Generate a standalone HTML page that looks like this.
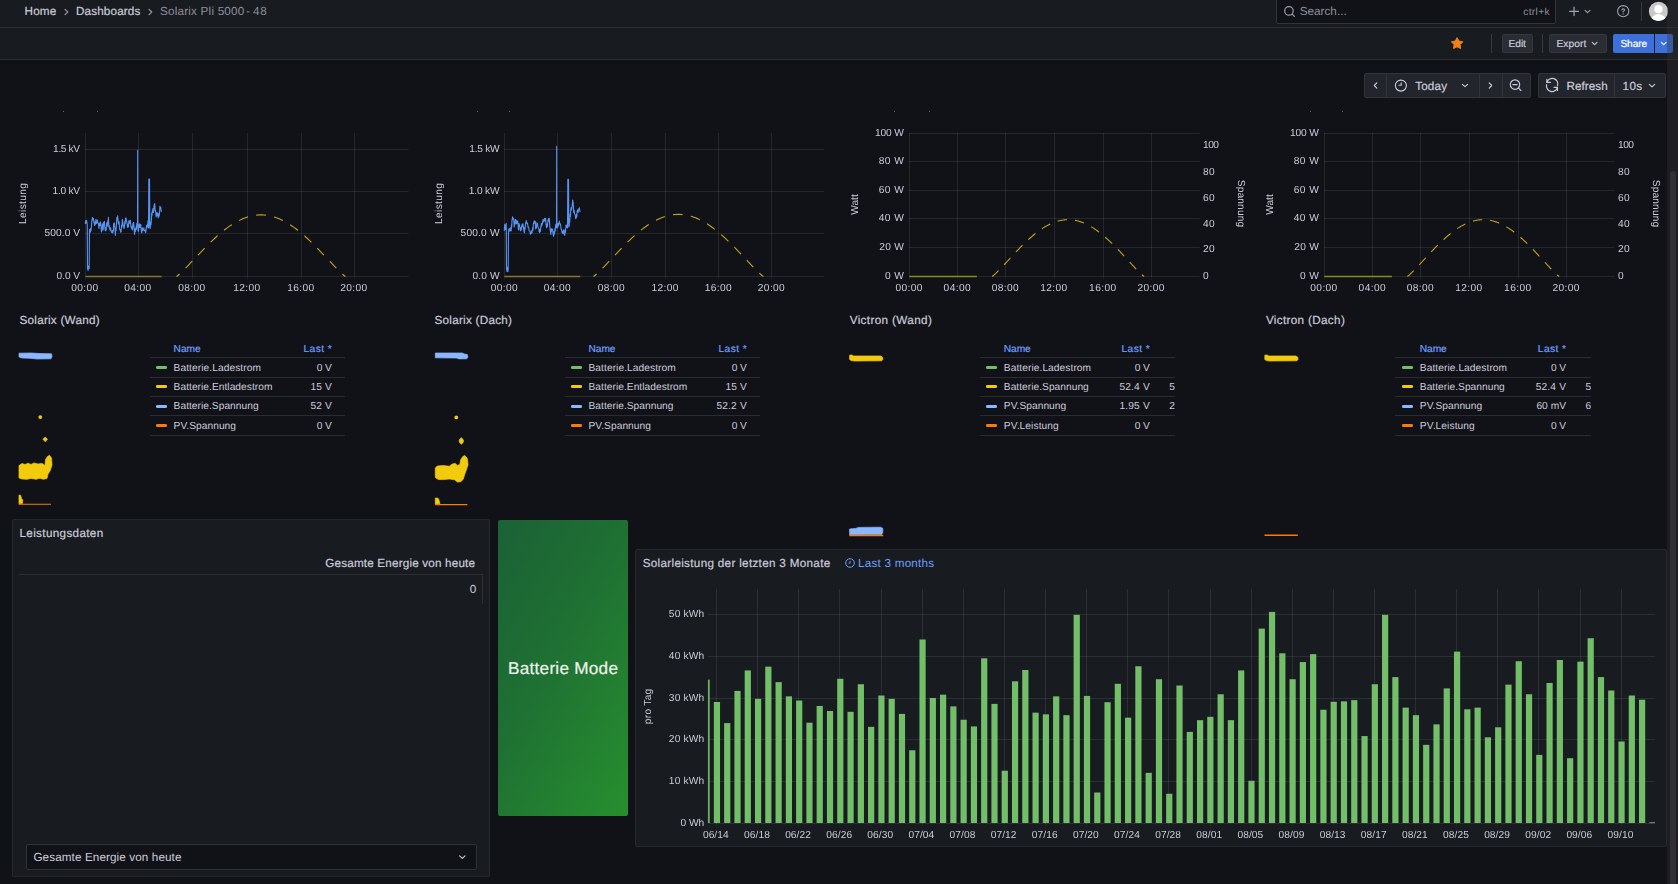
<!DOCTYPE html>
<html lang="en"><head><meta charset="utf-8"><title>Solarix Pli 5000-48 - Dashboards - Grafana</title>
<style>
html,body{margin:0;padding:0}
body{width:1678px;height:884px;overflow:hidden;background:#111217;position:relative;font-family:"Liberation Sans", sans-serif;-webkit-font-smoothing:antialiased}
#r{position:absolute;left:0;top:0;width:1678px;height:884px;overflow:hidden;background:#111217}
#r>div,#r>svg{position:absolute}
#cv{left:0;top:0;width:1678px;height:884px;will-change:transform;pointer-events:none}
.t{position:absolute;white-space:pre;line-height:1;font-family:"Liberation Sans", sans-serif;text-rendering:geometricPrecision}
</style></head>
<body><div id="r">
<div style="left:0.00px;top:0.00px;width:1678.00px;height:27.00px;background:#181b1f;"></div>
<div style="left:0.00px;top:27.00px;width:1678.00px;height:1.00px;background:#2b2d33;"></div>
<div style="left:0.00px;top:28.00px;width:1678.00px;height:31.00px;background:#181b1f;"></div>
<div style="left:0.00px;top:59.00px;width:1678.00px;height:1.00px;background:#2b2d33;"></div>
<svg style="left:0px;top:0px;" width="300" height="27" viewBox="0 0 300 27"><path d="M65.0 9.3 L67.80000000000001 12.0 L65.0 14.7" fill="none" stroke="#9a9ba8" stroke-width="1.15" stroke-linecap="round" stroke-linejoin="round"/><path d="M149.0 9.3 L151.8 12.0 L149.0 14.7" fill="none" stroke="#9a9ba8" stroke-width="1.15" stroke-linecap="round" stroke-linejoin="round"/></svg>
<div style="left:1276px;top:-4px;width:280px;height:27.5px;background:#111217;border:1px solid #33353d;border-radius:2px;box-sizing:border-box"></div>
<svg style="left:1280px;top:2px;" width="20" height="20" viewBox="0 0 20 20"><circle cx="8.95" cy="8.95" r="4.25" fill="none" stroke="#9d9eac" stroke-width="1.2"/><path d="M12.1 12.1 L14.4 14.4" stroke="#9d9eac" stroke-width="1.2" stroke-linecap="round"/></svg>
<svg style="left:1564px;top:2px;" width="30" height="20" viewBox="0 0 30 20"><path d="M10.05 5.0 V13.6 M5.6 9.3 H14.5" stroke="#a3a4b2" stroke-width="1.2" stroke-linecap="round"/><path d="M21.0 8.3 L23.5 10.6 L26.0 8.3" fill="none" stroke="#a3a4b2" stroke-width="1.1" stroke-linecap="round" stroke-linejoin="round"/></svg>
<svg style="left:1614px;top:2px;" width="20" height="20" viewBox="0 0 20 20"><circle cx="9.2" cy="9.2" r="5.6" fill="none" stroke="#a3a4b2" stroke-width="1.05"/><path d="M7.9 8.0 Q8.0 6.7 9.2 6.7 Q10.5 6.7 10.5 7.9 Q10.5 8.7 9.2 9.4 V10.0" fill="none" stroke="#a3a4b2" stroke-width="1.05" stroke-linecap="round"/><circle cx="9.2" cy="11.9" r="0.7" fill="#a3a4b2"/></svg>
<div style="left:1641.00px;top:2.00px;width:1.00px;height:18.50px;background:#393b43;"></div>
<svg style="left:1648px;top:1px;" width="22" height="22" viewBox="0 0 22 22"><defs><clipPath id="av"><circle cx="10.5" cy="10.4" r="9.6"/></clipPath></defs><circle cx="10.5" cy="10.4" r="9.6" fill="#c9c9c9"/><g clip-path="url(#av)"><circle cx="10.5" cy="8.2" r="4.1" fill="#fff"/><ellipse cx="10.5" cy="19.6" rx="7.4" ry="6.6" fill="#fff"/></g></svg>
<svg style="left:1448px;top:34px;" width="18" height="18" viewBox="0 0 18 18"><polygon points="9.10,3.65 10.95,7.10 14.81,7.80 12.10,10.62 12.63,14.50 9.10,12.80 5.57,14.50 6.10,10.62 3.39,7.80 7.25,7.10" fill="#ee8219" stroke="#ee8219" stroke-width="1.0" stroke-linejoin="round"/></svg>
<div style="left:1491.00px;top:34.00px;width:1.00px;height:19.00px;background:#393b43;"></div>
<div style="left:1542.00px;top:34.00px;width:1.00px;height:19.00px;background:#393b43;"></div>
<div style="left:1502px;top:34.3px;width:31px;height:18.5px;background:#2a2d33;border:1px solid #34373e;border-radius:2px;box-sizing:border-box"></div>
<div style="left:1549px;top:34.3px;width:58px;height:18.5px;background:#2a2d33;border:1px solid #34373e;border-radius:2px;box-sizing:border-box"></div>
<svg style="left:1588px;top:38px;" width="14" height="12" viewBox="0 0 14 12"><path d="M4.2 4.4 L6.6 6.7 L9.0 4.4" fill="none" stroke="#ccccdc" stroke-width="1.05" stroke-linecap="round" stroke-linejoin="round"/></svg>
<div style="left:1613px;top:34.3px;width:41px;height:18.5px;background:#3d71d9;border-radius:2px 0 0 2px"></div>
<div style="left:1655px;top:34.3px;width:18px;height:18.5px;background:#3d71d9;border-radius:0 2px 2px 0"></div>
<svg style="left:1657px;top:38px;" width="14" height="12" viewBox="0 0 14 12"><path d="M4.3 4.4 L6.7 6.7 L9.1 4.4" fill="none" stroke="#ffffff" stroke-width="1.05" stroke-linecap="round" stroke-linejoin="round"/></svg>
<div style="left:1364.4px;top:73.3px;width:23px;height:24.4px;background:#22252b;border:1px solid #32343b;border-radius:2px 0 0 2px;box-sizing:border-box"></div>
<div style="left:1386.4px;top:73.3px;width:93.6px;height:24.4px;background:#22252b;border:1px solid #32343b;border-radius:0;box-sizing:border-box"></div>
<div style="left:1479.0px;top:73.3px;width:23.8px;height:24.4px;background:#22252b;border:1px solid #32343b;border-radius:0;box-sizing:border-box"></div>
<div style="left:1501.8px;top:73.3px;width:29.0px;height:24.4px;background:#22252b;border:1px solid #32343b;border-radius:0 2px 2px 0;box-sizing:border-box"></div>
<div style="left:1538.1px;top:73.3px;width:76.6px;height:24.4px;background:#22252b;border:1px solid #32343b;border-radius:2px 0 0 2px;box-sizing:border-box"></div>
<div style="left:1613.7px;top:73.3px;width:52.3px;height:24.4px;background:#22252b;border:1px solid #32343b;border-radius:0 2px 2px 0;box-sizing:border-box"></div>
<svg style="left:1364px;top:73px;" width="170" height="26" viewBox="0 0 170 26"><path d="M12.8 9.9 L10.3 12.5 L12.8 15.1" fill="none" stroke="#ccccdc" stroke-width="1.15" stroke-linecap="round" stroke-linejoin="round"/><circle cx="36.9" cy="12.6" r="5.5" fill="none" stroke="#ccccdc" stroke-width="1.1"/><path d="M37.2 9.9 V12.3 H35.0" fill="none" stroke="#ccccdc" stroke-width="1.1" stroke-linecap="round" stroke-linejoin="round"/><path d="M98.4 11.3 L101.0 13.7 L103.6 11.3" fill="none" stroke="#ccccdc" stroke-width="1.1" stroke-linecap="round" stroke-linejoin="round"/><path d="M125.2 9.9 L127.7 12.5 L125.2 15.1" fill="none" stroke="#ccccdc" stroke-width="1.15" stroke-linecap="round" stroke-linejoin="round"/><circle cx="151.0" cy="11.6" r="4.7" fill="none" stroke="#ccccdc" stroke-width="1.15"/><path d="M148.8 11.6 H153.2 M154.5 15.1 L156.9 17.5" fill="none" stroke="#ccccdc" stroke-width="1.15" stroke-linecap="round"/></svg>
<svg style="left:1543px;top:76px;" width="20" height="20" viewBox="0 0 20 20"><path d="M3.9 6.4 A5.5 5.5 0 0 1 14.6 9.6" fill="none" stroke="#ccccdc" stroke-width="1.15" stroke-linecap="round"/><path d="M3.9 3.3 V6.4 H7.4" fill="none" stroke="#ccccdc" stroke-width="1.15" stroke-linecap="round" stroke-linejoin="round"/><path d="M14.5 11.3 A5.5 5.5 0 0 1 3.6 8.6" fill="none" stroke="#ccccdc" stroke-width="1.15" stroke-linecap="round"/><path d="M14.5 14.4 V11.3 H11.0" fill="none" stroke="#ccccdc" stroke-width="1.15" stroke-linecap="round" stroke-linejoin="round"/></svg>
<svg style="left:1645px;top:80px;" width="14" height="12" viewBox="0 0 14 12"><path d="M4.3 4.4 L7.0 6.9 L9.7 4.4" fill="none" stroke="#ccccdc" stroke-width="1.1" stroke-linecap="round" stroke-linejoin="round"/></svg>
<svg style="left:0px;top:0px;pointer-events:none" width="1678" height="300" viewBox="0 0 1678 300"><line x1="85.5" y1="133.0" x2="85.5" y2="277.0" stroke="rgba(240,250,255,0.09)" stroke-width="1"/><line x1="85.5" y1="277.0" x2="85.5" y2="280.0" stroke="rgba(240,250,255,0.045)" stroke-width="1"/><line x1="138.5" y1="133.0" x2="138.5" y2="277.0" stroke="rgba(240,250,255,0.09)" stroke-width="1"/><line x1="138.5" y1="277.0" x2="138.5" y2="280.0" stroke="rgba(240,250,255,0.045)" stroke-width="1"/><line x1="192.5" y1="133.0" x2="192.5" y2="277.0" stroke="rgba(240,250,255,0.09)" stroke-width="1"/><line x1="192.5" y1="277.0" x2="192.5" y2="280.0" stroke="rgba(240,250,255,0.045)" stroke-width="1"/><line x1="247.5" y1="133.0" x2="247.5" y2="277.0" stroke="rgba(240,250,255,0.09)" stroke-width="1"/><line x1="247.5" y1="277.0" x2="247.5" y2="280.0" stroke="rgba(240,250,255,0.045)" stroke-width="1"/><line x1="301.5" y1="133.0" x2="301.5" y2="277.0" stroke="rgba(240,250,255,0.09)" stroke-width="1"/><line x1="301.5" y1="277.0" x2="301.5" y2="280.0" stroke="rgba(240,250,255,0.045)" stroke-width="1"/><line x1="354.5" y1="133.0" x2="354.5" y2="277.0" stroke="rgba(240,250,255,0.09)" stroke-width="1"/><line x1="354.5" y1="277.0" x2="354.5" y2="280.0" stroke="rgba(240,250,255,0.045)" stroke-width="1"/><line x1="85" y1="149.5" x2="408.50" y2="149.5" stroke="rgba(240,250,255,0.09)" stroke-width="1"/><line x1="85" y1="191.5" x2="408.50" y2="191.5" stroke="rgba(240,250,255,0.09)" stroke-width="1"/><line x1="85" y1="233.5" x2="408.50" y2="233.5" stroke="rgba(240,250,255,0.09)" stroke-width="1"/><line x1="85" y1="276.5" x2="408.50" y2="276.5" stroke="rgba(240,250,255,0.09)" stroke-width="1"/><polyline points="85.24,223.88 85.72,220.63 86.02,223.23 86.49,220.40 86.71,221.10 87.01,223.70 87.24,223.88 87.49,268.60 87.73,268.07 88.03,270.67 88.28,266.40 88.58,266.05 88.88,268.65 89.18,268.60 89.48,229.86 89.82,229.59 90.12,232.19 90.47,231.85 90.82,227.94 91.12,230.54 91.47,225.87 91.72,221.89 92.44,217.46 92.74,220.06 93.46,218.40 93.96,222.89 94.18,222.88 94.48,225.48 94.70,225.37 95.18,221.66 95.48,224.26 95.95,219.40 96.17,220.88 96.47,223.48 96.70,222.39 97.42,220.05 97.72,222.65 98.44,223.88 98.94,228.36 99.53,222.96 99.83,225.56 100.43,221.89 100.78,223.77 101.08,226.37 101.43,231.85 101.77,227.93 102.07,230.53 102.42,223.88 102.64,226.42 102.94,229.02 103.17,229.86 103.64,222.31 103.94,224.91 104.41,221.39 104.76,226.94 105.06,229.54 105.41,230.85 105.88,227.61 106.18,230.21 106.65,222.89 106.88,223.76 107.18,226.36 107.40,225.87 107.75,220.85 108.05,223.45 108.40,217.41 108.89,226.87 109.24,225.55 109.54,228.15 109.89,229.86 110.61,227.67 110.91,230.27 111.63,232.34 112.35,230.42 112.65,233.02 113.37,230.85 113.72,223.63 114.02,226.23 114.37,222.89 114.72,226.45 115.02,229.05 115.37,235.33 115.71,228.17 116.01,230.77 116.36,225.87 116.83,217.53 117.13,220.13 117.61,215.91 117.83,218.44 118.13,221.04 118.35,223.88 118.58,221.32 118.88,223.92 119.10,221.89 119.32,226.08 119.62,228.68 119.85,229.86 120.32,229.64 120.62,232.24 121.09,231.85 121.56,224.94 121.86,227.54 122.34,219.40 122.68,221.34 122.98,223.94 123.33,225.87 123.68,226.03 123.98,228.63 124.33,227.37 124.80,221.40 125.10,224.00 125.57,218.40 126.04,217.87 126.34,220.47 126.82,221.89 127.17,224.77 127.47,227.37 127.81,225.87 128.16,224.26 128.46,226.86 128.81,220.89 129.41,220.84 129.71,223.44 130.30,220.40 130.65,223.74 130.95,226.34 131.30,227.86 131.77,226.75 132.07,229.35 132.54,229.86 132.89,223.63 133.19,226.23 133.54,222.39 133.89,226.13 134.19,228.73 134.53,234.34 135.01,228.90 135.31,231.50 135.78,229.86 136.13,226.74 136.43,229.34 136.77,223.88 137.01,223.14 137.31,225.74 137.55,225.87 137.67,150.20 137.80,227.86 138.01,229.08 138.31,231.68 138.52,229.86 138.74,225.07 139.04,227.67 139.26,223.88 139.86,224.85 140.16,227.45 140.76,224.38 141.11,228.84 141.41,231.44 141.75,232.84 142.35,227.85 142.65,230.45 143.25,229.86 143.84,227.78 144.14,230.38 144.74,230.85 145.34,230.11 145.64,232.71 146.23,228.36 146.58,225.44 146.88,228.04 147.23,225.37 147.45,223.95 147.75,226.55 147.98,220.89 148.52,227.86 148.82,179.00 149.22,225.87 149.52,179.00 149.82,227.86 150.22,228.36 150.69,222.13 150.99,224.73 151.46,219.40 151.69,212.99 151.99,215.59 152.21,212.93 152.43,209.96 152.73,212.56 152.96,208.45 153.18,209.87 153.48,212.47 153.70,211.43 154.05,205.14 154.35,207.74 154.70,203.47 155.20,210.94 155.54,210.81 155.84,213.41 156.19,216.91 156.79,212.88 157.09,215.48 157.69,212.93 157.91,215.41 158.21,218.01 158.43,216.41 158.90,213.51 159.20,216.11 159.68,210.94 159.90,206.21 160.20,208.81 160.42,207.45 160.77,207.28 161.07,209.88 161.42,211.93" fill="none" stroke="#5794f2" stroke-width="1.1" stroke-linejoin="round"/><line x1="85.50" y1="276.45" x2="161.50" y2="276.45" stroke="#857829" stroke-width="1.4"/><polyline points="176.50,276.50 177.91,275.46 179.31,274.24 180.72,272.94 182.13,271.59 183.54,270.20 184.94,268.79 186.35,267.35 187.76,265.89 189.17,264.42 190.57,262.94 191.98,261.46 193.39,259.97 194.80,258.47 196.20,256.98 197.61,255.49 199.02,254.01 200.43,252.53 201.84,251.06 203.24,249.60 204.65,248.16 206.06,246.73 207.47,245.31 208.87,243.91 210.28,242.53 211.69,241.17 213.09,239.83 214.50,238.51 215.91,237.22 217.32,235.96 218.72,234.72 220.13,233.51 221.54,232.32 222.95,231.17 224.35,230.05 225.76,228.97 227.17,227.92 228.58,226.90 229.98,225.92 231.39,224.97 232.80,224.07 234.21,223.20 235.61,222.37 237.02,221.58 238.43,220.83 239.84,220.13 241.25,219.46 242.65,218.84 244.06,218.27 245.47,217.73 246.88,217.25 248.28,216.80 249.69,216.41 251.10,216.05 252.50,215.75 253.91,215.49 255.32,215.28 256.73,215.11 258.13,214.99 259.54,214.92 260.95,214.90 262.36,214.92 263.76,214.99 265.17,215.11 266.58,215.28 267.99,215.49 269.39,215.75 270.80,216.05 272.21,216.41 273.62,216.80 275.02,217.25 276.43,217.73 277.84,218.27 279.25,218.84 280.65,219.46 282.06,220.13 283.47,220.83 284.88,221.58 286.28,222.37 287.69,223.20 289.10,224.07 290.51,224.97 291.91,225.92 293.32,226.90 294.73,227.92 296.14,228.97 297.54,230.05 298.95,231.17 300.36,232.32 301.77,233.51 303.17,234.72 304.58,235.96 305.99,237.22 307.40,238.51 308.80,239.83 310.21,241.17 311.62,242.53 313.03,243.91 314.43,245.31 315.84,246.73 317.25,248.16 318.66,249.60 320.06,251.06 321.47,252.53 322.88,254.01 324.29,255.49 325.69,256.98 327.10,258.47 328.51,259.97 329.92,261.46 331.32,262.94 332.73,264.42 334.14,265.89 335.55,267.35 336.95,268.79 338.36,270.20 339.77,271.59 341.18,272.94 342.58,274.24 343.99,275.46 345.40,276.50" fill="none" stroke="#c4a417" stroke-width="1.1" stroke-dasharray="9.6 8.4" stroke-dashoffset="5.6"/></svg>
<svg style="left:0px;top:0px;pointer-events:none" width="1678" height="300" viewBox="0 0 1678 300"><line x1="504.5" y1="133.0" x2="504.5" y2="277.0" stroke="rgba(240,250,255,0.09)" stroke-width="1"/><line x1="504.5" y1="277.0" x2="504.5" y2="280.0" stroke="rgba(240,250,255,0.045)" stroke-width="1"/><line x1="557.5" y1="133.0" x2="557.5" y2="277.0" stroke="rgba(240,250,255,0.09)" stroke-width="1"/><line x1="557.5" y1="277.0" x2="557.5" y2="280.0" stroke="rgba(240,250,255,0.045)" stroke-width="1"/><line x1="611.5" y1="133.0" x2="611.5" y2="277.0" stroke="rgba(240,250,255,0.09)" stroke-width="1"/><line x1="611.5" y1="277.0" x2="611.5" y2="280.0" stroke="rgba(240,250,255,0.045)" stroke-width="1"/><line x1="665.5" y1="133.0" x2="665.5" y2="277.0" stroke="rgba(240,250,255,0.09)" stroke-width="1"/><line x1="665.5" y1="277.0" x2="665.5" y2="280.0" stroke="rgba(240,250,255,0.045)" stroke-width="1"/><line x1="718.5" y1="133.0" x2="718.5" y2="277.0" stroke="rgba(240,250,255,0.09)" stroke-width="1"/><line x1="718.5" y1="277.0" x2="718.5" y2="280.0" stroke="rgba(240,250,255,0.045)" stroke-width="1"/><line x1="771.5" y1="133.0" x2="771.5" y2="277.0" stroke="rgba(240,250,255,0.09)" stroke-width="1"/><line x1="771.5" y1="277.0" x2="771.5" y2="280.0" stroke="rgba(240,250,255,0.045)" stroke-width="1"/><line x1="504" y1="149.5" x2="824.30" y2="149.5" stroke="rgba(240,250,255,0.09)" stroke-width="1"/><line x1="504" y1="191.5" x2="824.30" y2="191.5" stroke="rgba(240,250,255,0.09)" stroke-width="1"/><line x1="504" y1="233.5" x2="824.30" y2="233.5" stroke="rgba(240,250,255,0.09)" stroke-width="1"/><line x1="504" y1="276.5" x2="824.30" y2="276.5" stroke="rgba(240,250,255,0.09)" stroke-width="1"/><polyline points="504.24,230.85 504.74,224.38 505.09,226.94 505.39,229.54 505.74,228.36 506.24,223.38 506.49,269.60 506.73,269.17 507.03,271.77 507.28,267.40 507.58,268.93 507.88,271.53 508.18,269.60 508.48,232.84 508.82,228.71 509.12,231.31 509.47,230.85 509.82,228.46 510.12,231.06 510.47,227.86 510.69,227.72 510.99,230.32 511.21,230.85 511.44,224.70 511.74,227.30 511.96,220.89 512.56,216.72 512.86,219.32 513.46,218.40 513.68,219.98 513.98,222.58 514.20,226.87 514.55,221.84 514.85,224.44 515.20,219.90 515.55,219.36 515.85,221.96 516.19,223.88 516.67,220.89 516.97,223.49 517.44,220.89 517.79,221.98 518.09,224.58 518.43,229.86 518.66,223.75 518.96,226.35 519.18,223.88 519.78,226.99 520.08,229.59 520.67,230.85 521.02,227.21 521.32,229.81 521.67,226.87 522.14,224.13 522.44,226.73 522.91,223.88 523.51,228.09 523.81,230.69 524.41,232.84 524.76,226.94 525.06,229.54 525.40,224.88 526.25,220.63 526.55,223.23 527.40,222.89 527.74,224.82 528.04,227.42 528.39,226.87 528.74,227.95 529.04,230.55 529.39,230.85 529.98,231.49 530.28,234.09 530.88,233.34 531.48,230.83 531.78,233.43 532.37,229.86 532.72,227.64 533.02,230.24 533.37,223.88 534.22,220.73 534.52,223.33 535.36,221.39 535.61,228.86 536.08,225.72 536.38,228.32 536.86,222.89 537.45,223.50 537.75,226.10 538.35,227.86 538.82,229.12 539.12,231.72 539.59,232.34 540.07,229.01 540.37,231.61 540.84,226.87 541.44,223.26 541.74,225.86 542.33,223.88 543.05,219.26 543.35,221.86 544.07,220.89 544.67,218.23 544.97,220.83 545.57,218.40 545.92,222.79 546.22,225.39 546.56,227.86 547.04,223.98 547.34,226.58 547.81,221.89 548.41,218.62 548.71,221.22 549.30,218.40 549.80,225.87 550.15,229.43 550.45,232.03 550.80,234.34 551.27,228.90 551.57,231.50 552.04,228.86 552.64,229.88 552.94,232.48 553.53,236.33 554.01,231.51 554.31,234.11 554.78,230.85 555.00,228.45 555.30,231.05 555.53,225.87 555.89,224.23 556.19,226.83 556.55,227.86 556.67,146.30 556.80,226.87 557.01,224.37 557.31,226.97 557.52,227.86 557.99,223.30 558.29,225.90 558.76,224.88 559.36,221.05 559.66,223.65 560.26,223.88 560.48,224.08 560.78,226.68 561.00,228.86 561.60,229.87 561.90,232.47 562.50,232.84 562.84,231.46 563.14,234.06 563.49,229.86 563.96,230.55 564.26,233.15 564.74,235.33 565.08,229.97 565.38,232.57 565.73,228.36 566.20,224.89 566.50,227.49 566.98,225.87 567.52,227.86 567.82,179.40 568.22,223.88 568.52,179.40 568.82,226.87 569.22,225.87 569.44,219.73 569.74,222.33 569.96,217.91 570.19,213.84 570.49,216.44 570.71,209.94 571.18,207.61 571.48,210.21 571.96,207.45 572.45,202.47 572.68,200.11 572.98,202.71 573.20,202.47 573.70,212.43 574.17,210.40 574.47,213.00 574.94,214.42 575.42,216.11 575.72,218.71 576.19,217.91 576.54,214.03 576.84,216.63 577.18,210.94 577.90,209.84 578.20,212.44 578.93,208.45 579.40,207.74 579.70,210.34 580.17,211.93" fill="none" stroke="#5794f2" stroke-width="1.1" stroke-linejoin="round"/><line x1="504.40" y1="276.45" x2="580.20" y2="276.45" stroke="#857829" stroke-width="1.4"/><polyline points="593.50,276.50 594.92,275.45 596.33,274.22 597.75,272.91 599.16,271.55 600.58,270.15 602.00,268.72 603.41,267.27 604.83,265.81 606.24,264.33 607.66,262.83 609.07,261.34 610.49,259.83 611.91,258.33 613.32,256.82 614.74,255.32 616.15,253.83 617.57,252.34 618.99,250.86 620.40,249.39 621.82,247.93 623.23,246.48 624.65,245.06 626.06,243.65 627.48,242.25 628.90,240.88 630.31,239.53 631.73,238.21 633.14,236.90 634.56,235.63 635.98,234.38 637.39,233.16 638.81,231.97 640.22,230.81 641.64,229.68 643.05,228.58 644.47,227.52 645.89,226.50 647.30,225.51 648.72,224.55 650.13,223.64 651.55,222.76 652.97,221.93 654.38,221.13 655.80,220.38 657.21,219.67 658.63,219.00 660.04,218.38 661.46,217.79 662.88,217.26 664.29,216.77 665.71,216.32 667.12,215.92 668.54,215.56 669.96,215.26 671.37,214.99 672.79,214.78 674.20,214.61 675.62,214.50 677.03,214.42 678.45,214.40 679.87,214.42 681.28,214.50 682.70,214.61 684.11,214.78 685.53,214.99 686.94,215.26 688.36,215.56 689.78,215.92 691.19,216.32 692.61,216.77 694.02,217.26 695.44,217.79 696.86,218.38 698.27,219.00 699.69,219.67 701.10,220.38 702.52,221.13 703.93,221.93 705.35,222.76 706.77,223.64 708.18,224.55 709.60,225.51 711.01,226.50 712.43,227.52 713.85,228.58 715.26,229.68 716.68,230.81 718.09,231.97 719.51,233.16 720.92,234.38 722.34,235.63 723.76,236.90 725.17,238.21 726.59,239.53 728.00,240.88 729.42,242.25 730.84,243.65 732.25,245.06 733.67,246.48 735.08,247.93 736.50,249.39 737.91,250.86 739.33,252.34 740.75,253.83 742.16,255.32 743.58,256.82 744.99,258.33 746.41,259.83 747.83,261.34 749.24,262.83 750.66,264.33 752.07,265.81 753.49,267.27 754.90,268.72 756.32,270.15 757.74,271.55 759.15,272.91 760.57,274.22 761.98,275.45 763.40,276.50" fill="none" stroke="#c4a417" stroke-width="1.1" stroke-dasharray="9.6 8.4" stroke-dashoffset="5.6"/></svg>
<svg style="left:0px;top:0px;pointer-events:none" width="1678" height="300" viewBox="0 0 1678 300"><line x1="909.5" y1="133.0" x2="909.5" y2="277.0" stroke="rgba(240,250,255,0.09)" stroke-width="1"/><line x1="909.5" y1="277.0" x2="909.5" y2="280.0" stroke="rgba(240,250,255,0.045)" stroke-width="1"/><line x1="957.5" y1="133.0" x2="957.5" y2="277.0" stroke="rgba(240,250,255,0.09)" stroke-width="1"/><line x1="957.5" y1="277.0" x2="957.5" y2="280.0" stroke="rgba(240,250,255,0.045)" stroke-width="1"/><line x1="1005.5" y1="133.0" x2="1005.5" y2="277.0" stroke="rgba(240,250,255,0.09)" stroke-width="1"/><line x1="1005.5" y1="277.0" x2="1005.5" y2="280.0" stroke="rgba(240,250,255,0.045)" stroke-width="1"/><line x1="1054.5" y1="133.0" x2="1054.5" y2="277.0" stroke="rgba(240,250,255,0.09)" stroke-width="1"/><line x1="1054.5" y1="277.0" x2="1054.5" y2="280.0" stroke="rgba(240,250,255,0.045)" stroke-width="1"/><line x1="1103.5" y1="133.0" x2="1103.5" y2="277.0" stroke="rgba(240,250,255,0.09)" stroke-width="1"/><line x1="1103.5" y1="277.0" x2="1103.5" y2="280.0" stroke="rgba(240,250,255,0.045)" stroke-width="1"/><line x1="1151.5" y1="133.0" x2="1151.5" y2="277.0" stroke="rgba(240,250,255,0.09)" stroke-width="1"/><line x1="1151.5" y1="277.0" x2="1151.5" y2="280.0" stroke="rgba(240,250,255,0.045)" stroke-width="1"/><line x1="909" y1="133.5" x2="1199.70" y2="133.5" stroke="rgba(240,250,255,0.09)" stroke-width="1"/><line x1="909" y1="161.5" x2="1199.70" y2="161.5" stroke="rgba(240,250,255,0.09)" stroke-width="1"/><line x1="909" y1="190.5" x2="1199.70" y2="190.5" stroke="rgba(240,250,255,0.09)" stroke-width="1"/><line x1="909" y1="218.5" x2="1199.70" y2="218.5" stroke="rgba(240,250,255,0.09)" stroke-width="1"/><line x1="909" y1="247.5" x2="1199.70" y2="247.5" stroke="rgba(240,250,255,0.09)" stroke-width="1"/><line x1="909" y1="276.5" x2="1199.70" y2="276.5" stroke="rgba(240,250,255,0.09)" stroke-width="1"/><line x1="909.30" y1="276.45" x2="976.90" y2="276.45" stroke="#8a8a24" stroke-width="1.4"/><polyline points="992.20,276.50 993.47,275.54 994.73,274.41 996.00,273.22 997.26,271.97 998.53,270.69 999.80,269.39 1001.06,268.06 1002.33,266.72 1003.59,265.36 1004.86,264.00 1006.12,262.63 1007.39,261.25 1008.66,259.88 1009.92,258.50 1011.19,257.13 1012.45,255.76 1013.72,254.40 1014.99,253.04 1016.25,251.70 1017.52,250.37 1018.78,249.05 1020.05,247.74 1021.31,246.45 1022.58,245.18 1023.85,243.92 1025.11,242.69 1026.38,241.47 1027.64,240.28 1028.91,239.11 1030.17,237.97 1031.44,236.86 1032.71,235.77 1033.97,234.71 1035.24,233.67 1036.50,232.67 1037.77,231.70 1039.04,230.76 1040.30,229.86 1041.57,228.99 1042.83,228.15 1044.10,227.35 1045.37,226.59 1046.63,225.86 1047.90,225.17 1049.16,224.52 1050.43,223.91 1051.69,223.34 1052.96,222.80 1054.23,222.31 1055.49,221.86 1056.76,221.45 1058.02,221.09 1059.29,220.76 1060.56,220.48 1061.82,220.24 1063.09,220.05 1064.35,219.90 1065.62,219.79 1066.88,219.72 1068.15,219.70 1069.42,219.72 1070.68,219.79 1071.95,219.90 1073.21,220.05 1074.48,220.24 1075.74,220.48 1077.01,220.76 1078.28,221.09 1079.54,221.45 1080.81,221.86 1082.07,222.31 1083.34,222.80 1084.61,223.34 1085.87,223.91 1087.14,224.52 1088.40,225.17 1089.67,225.86 1090.93,226.59 1092.20,227.35 1093.47,228.15 1094.73,228.99 1096.00,229.86 1097.26,230.76 1098.53,231.70 1099.80,232.67 1101.06,233.67 1102.33,234.71 1103.59,235.77 1104.86,236.86 1106.12,237.97 1107.39,239.11 1108.66,240.28 1109.92,241.47 1111.19,242.69 1112.45,243.92 1113.72,245.18 1114.99,246.45 1116.25,247.74 1117.52,249.05 1118.78,250.37 1120.05,251.70 1121.31,253.04 1122.58,254.40 1123.85,255.76 1125.11,257.13 1126.38,258.50 1127.64,259.88 1128.91,261.25 1130.18,262.63 1131.44,264.00 1132.71,265.36 1133.97,266.72 1135.24,268.06 1136.50,269.39 1137.77,270.69 1139.04,271.97 1140.30,273.22 1141.57,274.41 1142.83,275.54 1144.10,276.50" fill="none" stroke="#c4a417" stroke-width="1.1" stroke-dasharray="9.4 8.1" stroke-dashoffset="0.8"/></svg>
<svg style="left:0px;top:0px;pointer-events:none" width="1678" height="300" viewBox="0 0 1678 300"><line x1="1324.5" y1="133.0" x2="1324.5" y2="277.0" stroke="rgba(240,250,255,0.09)" stroke-width="1"/><line x1="1324.5" y1="277.0" x2="1324.5" y2="280.0" stroke="rgba(240,250,255,0.045)" stroke-width="1"/><line x1="1372.5" y1="133.0" x2="1372.5" y2="277.0" stroke="rgba(240,250,255,0.09)" stroke-width="1"/><line x1="1372.5" y1="277.0" x2="1372.5" y2="280.0" stroke="rgba(240,250,255,0.045)" stroke-width="1"/><line x1="1420.5" y1="133.0" x2="1420.5" y2="277.0" stroke="rgba(240,250,255,0.09)" stroke-width="1"/><line x1="1420.5" y1="277.0" x2="1420.5" y2="280.0" stroke="rgba(240,250,255,0.045)" stroke-width="1"/><line x1="1469.5" y1="133.0" x2="1469.5" y2="277.0" stroke="rgba(240,250,255,0.09)" stroke-width="1"/><line x1="1469.5" y1="277.0" x2="1469.5" y2="280.0" stroke="rgba(240,250,255,0.045)" stroke-width="1"/><line x1="1518.5" y1="133.0" x2="1518.5" y2="277.0" stroke="rgba(240,250,255,0.09)" stroke-width="1"/><line x1="1518.5" y1="277.0" x2="1518.5" y2="280.0" stroke="rgba(240,250,255,0.045)" stroke-width="1"/><line x1="1566.5" y1="133.0" x2="1566.5" y2="277.0" stroke="rgba(240,250,255,0.09)" stroke-width="1"/><line x1="1566.5" y1="277.0" x2="1566.5" y2="280.0" stroke="rgba(240,250,255,0.045)" stroke-width="1"/><line x1="1324" y1="133.5" x2="1614.20" y2="133.5" stroke="rgba(240,250,255,0.09)" stroke-width="1"/><line x1="1324" y1="161.5" x2="1614.20" y2="161.5" stroke="rgba(240,250,255,0.09)" stroke-width="1"/><line x1="1324" y1="190.5" x2="1614.20" y2="190.5" stroke="rgba(240,250,255,0.09)" stroke-width="1"/><line x1="1324" y1="218.5" x2="1614.20" y2="218.5" stroke="rgba(240,250,255,0.09)" stroke-width="1"/><line x1="1324" y1="247.5" x2="1614.20" y2="247.5" stroke="rgba(240,250,255,0.09)" stroke-width="1"/><line x1="1324" y1="276.5" x2="1614.20" y2="276.5" stroke="rgba(240,250,255,0.09)" stroke-width="1"/><line x1="1324.30" y1="276.45" x2="1391.90" y2="276.45" stroke="#8a8a24" stroke-width="1.4"/><polyline points="1407.40,276.50 1408.66,275.54 1409.93,274.41 1411.19,273.22 1412.46,271.97 1413.72,270.69 1414.99,269.39 1416.25,268.06 1417.51,266.72 1418.78,265.36 1420.04,264.00 1421.31,262.63 1422.57,261.25 1423.83,259.88 1425.10,258.50 1426.36,257.13 1427.63,255.76 1428.89,254.40 1430.15,253.04 1431.42,251.70 1432.68,250.37 1433.95,249.05 1435.21,247.74 1436.48,246.45 1437.74,245.18 1439.00,243.92 1440.27,242.69 1441.53,241.47 1442.80,240.28 1444.06,239.11 1445.33,237.97 1446.59,236.86 1447.85,235.77 1449.12,234.71 1450.38,233.67 1451.65,232.67 1452.91,231.70 1454.17,230.76 1455.44,229.86 1456.70,228.99 1457.97,228.15 1459.23,227.35 1460.50,226.59 1461.76,225.86 1463.02,225.17 1464.29,224.52 1465.55,223.91 1466.82,223.34 1468.08,222.80 1469.34,222.31 1470.61,221.86 1471.87,221.45 1473.14,221.09 1474.40,220.76 1475.66,220.48 1476.93,220.24 1478.19,220.05 1479.46,219.90 1480.72,219.79 1481.99,219.72 1483.25,219.70 1484.51,219.72 1485.78,219.79 1487.04,219.90 1488.31,220.05 1489.57,220.24 1490.84,220.48 1492.10,220.76 1493.36,221.09 1494.63,221.45 1495.89,221.86 1497.16,222.31 1498.42,222.80 1499.68,223.34 1500.95,223.91 1502.21,224.52 1503.48,225.17 1504.74,225.86 1506.00,226.59 1507.27,227.35 1508.53,228.15 1509.80,228.99 1511.06,229.86 1512.33,230.76 1513.59,231.70 1514.85,232.67 1516.12,233.67 1517.38,234.71 1518.65,235.77 1519.91,236.86 1521.17,237.97 1522.44,239.11 1523.70,240.28 1524.97,241.47 1526.23,242.69 1527.50,243.92 1528.76,245.18 1530.02,246.45 1531.29,247.74 1532.55,249.05 1533.82,250.37 1535.08,251.70 1536.35,253.04 1537.61,254.40 1538.87,255.76 1540.14,257.13 1541.40,258.50 1542.67,259.88 1543.93,261.25 1545.19,262.63 1546.46,264.00 1547.72,265.36 1548.99,266.72 1550.25,268.06 1551.51,269.39 1552.78,270.69 1554.04,271.97 1555.31,273.22 1556.57,274.41 1557.84,275.54 1559.10,276.50" fill="none" stroke="#c4a417" stroke-width="1.1" stroke-dasharray="9.4 8.1" stroke-dashoffset="0.8"/></svg>
<div style="left:62.50px;top:111.20px;width:1.00px;height:1.00px;background:rgba(150,170,200,0.55);"></div>
<div style="left:96.80px;top:111.20px;width:1.00px;height:1.00px;background:rgba(150,170,200,0.55);"></div>
<div style="left:477.30px;top:111.20px;width:1.00px;height:1.00px;background:rgba(150,170,200,0.55);"></div>
<div style="left:508.80px;top:111.20px;width:1.00px;height:1.00px;background:rgba(150,170,200,0.55);"></div>
<div style="left:894.30px;top:111.20px;width:1.00px;height:1.00px;background:rgba(150,170,200,0.55);"></div>
<div style="left:928.70px;top:111.20px;width:1.00px;height:1.00px;background:rgba(150,170,200,0.55);"></div>
<div style="left:1310.00px;top:111.20px;width:1.00px;height:1.00px;background:rgba(150,170,200,0.55);"></div>
<div style="left:1341.70px;top:111.20px;width:1.00px;height:1.00px;background:rgba(150,170,200,0.55);"></div>
<div style="left:150.10px;top:357.00px;width:194.90px;height:1.00px;background:#2a2c33;"></div>
<div style="left:150.10px;top:377.00px;width:194.90px;height:1.00px;background:#2a2c33;"></div>
<div style="left:150.10px;top:396.00px;width:194.90px;height:1.00px;background:#2a2c33;"></div>
<div style="left:150.10px;top:415.00px;width:194.90px;height:1.00px;background:#2a2c33;"></div>
<div style="left:150.10px;top:435.00px;width:194.90px;height:1.00px;background:#2a2c33;"></div>
<div style="left:156.00px;top:366.30px;width:11.20px;height:2.50px;background:#73bf69;border-radius:1.3px"></div>
<div style="left:156.00px;top:385.40px;width:11.20px;height:2.50px;background:#f2cc0c;border-radius:1.3px"></div>
<div style="left:156.00px;top:405.00px;width:11.20px;height:2.50px;background:#8ab8ff;border-radius:1.3px"></div>
<div style="left:156.00px;top:424.30px;width:11.20px;height:2.50px;background:#ff780a;border-radius:1.3px"></div>
<div style="left:565.20px;top:357.00px;width:194.70px;height:1.00px;background:#2a2c33;"></div>
<div style="left:565.20px;top:377.00px;width:194.70px;height:1.00px;background:#2a2c33;"></div>
<div style="left:565.20px;top:396.00px;width:194.70px;height:1.00px;background:#2a2c33;"></div>
<div style="left:565.20px;top:415.00px;width:194.70px;height:1.00px;background:#2a2c33;"></div>
<div style="left:565.20px;top:435.00px;width:194.70px;height:1.00px;background:#2a2c33;"></div>
<div style="left:570.90px;top:366.30px;width:11.20px;height:2.50px;background:#73bf69;border-radius:1.3px"></div>
<div style="left:570.90px;top:385.40px;width:11.20px;height:2.50px;background:#f2cc0c;border-radius:1.3px"></div>
<div style="left:570.90px;top:405.00px;width:11.20px;height:2.50px;background:#8ab8ff;border-radius:1.3px"></div>
<div style="left:570.90px;top:424.30px;width:11.20px;height:2.50px;background:#ff780a;border-radius:1.3px"></div>
<div style="left:980.00px;top:357.00px;width:194.70px;height:1.00px;background:#2a2c33;"></div>
<div style="left:980.00px;top:377.00px;width:194.70px;height:1.00px;background:#2a2c33;"></div>
<div style="left:980.00px;top:396.00px;width:194.70px;height:1.00px;background:#2a2c33;"></div>
<div style="left:980.00px;top:415.00px;width:194.70px;height:1.00px;background:#2a2c33;"></div>
<div style="left:980.00px;top:435.00px;width:194.70px;height:1.00px;background:#2a2c33;"></div>
<div style="left:986.20px;top:366.30px;width:11.20px;height:2.50px;background:#73bf69;border-radius:1.3px"></div>
<div style="left:986.20px;top:385.40px;width:11.20px;height:2.50px;background:#f2cc0c;border-radius:1.3px"></div>
<div style="left:986.20px;top:405.00px;width:11.20px;height:2.50px;background:#8ab8ff;border-radius:1.3px"></div>
<div style="left:986.20px;top:424.30px;width:11.20px;height:2.50px;background:#ff780a;border-radius:1.3px"></div>
<div style="left:1168.7px;top:379.7px;width:6px;height:14px;overflow:hidden;background:none"><span style="position:absolute;left:0.6px;top:3px;font-size:10.2px;line-height:1;text-rendering:geometricPrecision;color:#ccccdc">5</span></div>
<div style="left:1168.7px;top:398.8px;width:6px;height:14px;overflow:hidden;background:none"><span style="position:absolute;left:0.6px;top:3px;font-size:10.2px;line-height:1;text-rendering:geometricPrecision;color:#ccccdc">2</span></div>
<div style="left:1395.00px;top:357.00px;width:196.00px;height:1.00px;background:#2a2c33;"></div>
<div style="left:1395.00px;top:377.00px;width:196.00px;height:1.00px;background:#2a2c33;"></div>
<div style="left:1395.00px;top:396.00px;width:196.00px;height:1.00px;background:#2a2c33;"></div>
<div style="left:1395.00px;top:415.00px;width:196.00px;height:1.00px;background:#2a2c33;"></div>
<div style="left:1395.00px;top:435.00px;width:196.00px;height:1.00px;background:#2a2c33;"></div>
<div style="left:1401.80px;top:366.30px;width:11.20px;height:2.50px;background:#73bf69;border-radius:1.3px"></div>
<div style="left:1401.80px;top:385.40px;width:11.20px;height:2.50px;background:#f2cc0c;border-radius:1.3px"></div>
<div style="left:1401.80px;top:405.00px;width:11.20px;height:2.50px;background:#8ab8ff;border-radius:1.3px"></div>
<div style="left:1401.80px;top:424.30px;width:11.20px;height:2.50px;background:#ff780a;border-radius:1.3px"></div>
<div style="left:1585.0px;top:379.7px;width:6px;height:14px;overflow:hidden;background:none"><span style="position:absolute;left:0.6px;top:3px;font-size:10.2px;line-height:1;text-rendering:geometricPrecision;color:#ccccdc">5</span></div>
<div style="left:1585.0px;top:398.8px;width:6px;height:14px;overflow:hidden;background:none"><span style="position:absolute;left:0.6px;top:3px;font-size:10.2px;line-height:1;text-rendering:geometricPrecision;color:#ccccdc">6</span></div>
<svg style="left:0px;top:300px;pointer-events:none" width="1678" height="260" viewBox="0 0 1678 260"><g transform="translate(0,-300)"><polygon points="19.0,353.2 31.0,353.0 41.0,353.6 51.5,353.8 52.0,356.5 51.0,358.8 37.0,359.0 29.0,358.2 22.0,358.0 19.0,357.0" fill="#8ab8ff" stroke="#8ab8ff" stroke-width="0.7" stroke-linejoin="round"/><circle cx="40.3" cy="417.1" r="1.9" fill="#f2cc0c"/><path d="M45.2 436.9 L47.5 439.3 L45.2 441.7 L42.9 439.3 Z" fill="#f2cc0c" stroke="#f2cc0c" stroke-width="0.6" stroke-linejoin="round"/><polygon points="19.0,465.5 22.0,463.5 25.0,464.5 28.0,463.2 31.0,464.5 34.0,463.0 38.0,464.0 42.0,463.4 45.0,465.5 45.5,459.5 47.5,456.5 49.5,455.3 51.5,458.0 52.0,465.0 50.0,471.0 48.0,474.0 47.0,478.5 43.0,479.3 40.0,478.2 36.0,479.3 31.0,478.4 27.0,479.3 22.0,479.0 19.0,478.0" fill="#f2cc0c" stroke="#f2cc0c" stroke-width="0.7" stroke-linejoin="round"/><polygon points="19.0,495.0 20.8,495.5 21.4,498.5 22.8,500.0 22.4,503.5 19.0,503.8" fill="#f2cc0c" stroke="#f2cc0c" stroke-width="0.7" stroke-linejoin="round"/><line x1="18.6" y1="504.2" x2="51.0" y2="504.2" stroke="#ff780a" stroke-width="1.1"/><polygon points="435.3,353.0 462.3,353.0 464.3,354.0 467.3,354.5 467.9,357.0 466.8,358.8 459.3,358.9 456.3,358.0 435.3,357.8" fill="#8ab8ff" stroke="#8ab8ff" stroke-width="0.7" stroke-linejoin="round"/><circle cx="456.3" cy="417.4" r="1.9" fill="#f2cc0c"/><path d="M461.3 437.6 L463.4 440 L463.4 442 L461.3 444.4 L459.2 442 L459.2 440 Z" fill="#f2cc0c" stroke="#f2cc0c" stroke-width="0.6" stroke-linejoin="round"/><polygon points="435.3,468.0 437.3,466.0 443.3,465.6 449.3,466.2 452.3,464.0 455.3,463.4 457.3,465.5 459.8,464.5 460.8,459.5 462.8,456.5 464.9,455.6 467.3,458.5 468.1,464.5 466.3,470.0 464.8,474.0 463.3,479.0 460.8,481.8 457.3,482.0 454.8,479.8 449.3,479.0 443.3,479.6 438.3,479.5 435.3,477.5" fill="#f2cc0c" stroke="#f2cc0c" stroke-width="0.7" stroke-linejoin="round"/><polygon points="435.3,498.0 438.1,498.2 439.1,500.5 439.9,503.8 435.3,504.0" fill="#f2cc0c" stroke="#f2cc0c" stroke-width="0.7" stroke-linejoin="round"/><line x1="435.1" y1="504.6" x2="467.3" y2="504.6" stroke="#ff780a" stroke-width="1.1"/><polygon points="849.6,355.2 852.0,355.0 853.6,356.0 880.6,356.0 882.6,357.2 882.8,359.6 881.6,360.8 854.6,361.0 851.1,360.6 849.6,359.5" fill="#f2cc0c" stroke="#f2cc0c" stroke-width="0.7" stroke-linejoin="round"/><polygon points="849.6,529.0 855.6,528.4 858.6,527.4 880.6,527.2 882.8,528.4 882.8,532.5 881.6,534.6 849.6,534.8" fill="#8ab8ff" stroke="#8ab8ff" stroke-width="0.7" stroke-linejoin="round"/><line x1="849.3000000000001" y1="535.4" x2="883.2" y2="535.4" stroke="#ff780a" stroke-width="1.5"/><polygon points="1264.8,355.2 1267.2,355.0 1268.8,356.0 1295.8,356.0 1297.8,357.2 1298.0,359.6 1296.8,360.8 1269.8,361.0 1266.3,360.6 1264.8,359.5" fill="#f2cc0c" stroke="#f2cc0c" stroke-width="0.7" stroke-linejoin="round"/><line x1="1264.5" y1="535.2" x2="1297.8" y2="535.2" stroke="#ff780a" stroke-width="1.6"/></g></svg>
<div style="left:12px;top:519px;width:478px;height:358px;background:#181b1f;border:1px solid #26282e;border-radius:2px;box-sizing:border-box"></div>
<div style="left:19.00px;top:574.00px;width:463.70px;height:1.00px;background:#2c2e35;"></div>
<div style="left:482.40px;top:574.00px;width:1.00px;height:29.60px;background:#2c2e35;"></div>
<div style="left:26.2px;top:844.2px;width:450.5px;height:25.4px;background:#111217;border:1px solid #30323a;border-radius:2px;box-sizing:border-box"></div>
<svg style="left:455px;top:851px;" width="14" height="12" viewBox="0 0 14 12"><path d="M4.6 4.9 L7.3 7.4 L10.0 4.9" fill="none" stroke="#ccccdc" stroke-width="1.1" stroke-linecap="round" stroke-linejoin="round"/></svg>
<div style="left:498px;top:519.8px;width:130px;height:296.3px;border-radius:2px;background:linear-gradient(120deg,#1b6136 0%,#1f7133 45%,#278f2f 100%)"></div>
<div style="left:635px;top:549px;width:1032px;height:298px;background:#181b1f;border:1px solid #26282e;border-radius:2px;box-sizing:border-box"></div>
<svg style="left:843px;top:556px;" width="14" height="14" viewBox="0 0 14 14"><circle cx="7.0" cy="7.0" r="4.3" fill="none" stroke="#6e9fff" stroke-width="1.0"/><path d="M7.1 5.2 V7.1 H5.9" fill="none" stroke="#6e9fff" stroke-width="0.9" stroke-linecap="round" stroke-linejoin="round"/></svg>
<svg style="left:0px;top:540px;pointer-events:none" width="1678" height="320" viewBox="0 0 1678 320"><g transform="translate(0,-540)"><line x1="716.5" y1="589.0" x2="716.5" y2="824.0" stroke="rgba(240,250,255,0.09)" stroke-width="1"/><line x1="716.5" y1="824.0" x2="716.5" y2="827.0" stroke="rgba(240,250,255,0.045)" stroke-width="1"/><line x1="757.5" y1="589.0" x2="757.5" y2="824.0" stroke="rgba(240,250,255,0.09)" stroke-width="1"/><line x1="757.5" y1="824.0" x2="757.5" y2="827.0" stroke="rgba(240,250,255,0.045)" stroke-width="1"/><line x1="798.5" y1="589.0" x2="798.5" y2="824.0" stroke="rgba(240,250,255,0.09)" stroke-width="1"/><line x1="798.5" y1="824.0" x2="798.5" y2="827.0" stroke="rgba(240,250,255,0.045)" stroke-width="1"/><line x1="839.5" y1="589.0" x2="839.5" y2="824.0" stroke="rgba(240,250,255,0.09)" stroke-width="1"/><line x1="839.5" y1="824.0" x2="839.5" y2="827.0" stroke="rgba(240,250,255,0.045)" stroke-width="1"/><line x1="881.5" y1="589.0" x2="881.5" y2="824.0" stroke="rgba(240,250,255,0.09)" stroke-width="1"/><line x1="881.5" y1="824.0" x2="881.5" y2="827.0" stroke="rgba(240,250,255,0.045)" stroke-width="1"/><line x1="922.5" y1="589.0" x2="922.5" y2="824.0" stroke="rgba(240,250,255,0.09)" stroke-width="1"/><line x1="922.5" y1="824.0" x2="922.5" y2="827.0" stroke="rgba(240,250,255,0.045)" stroke-width="1"/><line x1="963.5" y1="589.0" x2="963.5" y2="824.0" stroke="rgba(240,250,255,0.09)" stroke-width="1"/><line x1="963.5" y1="824.0" x2="963.5" y2="827.0" stroke="rgba(240,250,255,0.045)" stroke-width="1"/><line x1="1004.5" y1="589.0" x2="1004.5" y2="824.0" stroke="rgba(240,250,255,0.09)" stroke-width="1"/><line x1="1004.5" y1="824.0" x2="1004.5" y2="827.0" stroke="rgba(240,250,255,0.045)" stroke-width="1"/><line x1="1045.5" y1="589.0" x2="1045.5" y2="824.0" stroke="rgba(240,250,255,0.09)" stroke-width="1"/><line x1="1045.5" y1="824.0" x2="1045.5" y2="827.0" stroke="rgba(240,250,255,0.045)" stroke-width="1"/><line x1="1086.5" y1="589.0" x2="1086.5" y2="824.0" stroke="rgba(240,250,255,0.09)" stroke-width="1"/><line x1="1086.5" y1="824.0" x2="1086.5" y2="827.0" stroke="rgba(240,250,255,0.045)" stroke-width="1"/><line x1="1127.5" y1="589.0" x2="1127.5" y2="824.0" stroke="rgba(240,250,255,0.09)" stroke-width="1"/><line x1="1127.5" y1="824.0" x2="1127.5" y2="827.0" stroke="rgba(240,250,255,0.045)" stroke-width="1"/><line x1="1168.5" y1="589.0" x2="1168.5" y2="824.0" stroke="rgba(240,250,255,0.09)" stroke-width="1"/><line x1="1168.5" y1="824.0" x2="1168.5" y2="827.0" stroke="rgba(240,250,255,0.045)" stroke-width="1"/><line x1="1210.5" y1="589.0" x2="1210.5" y2="824.0" stroke="rgba(240,250,255,0.09)" stroke-width="1"/><line x1="1210.5" y1="824.0" x2="1210.5" y2="827.0" stroke="rgba(240,250,255,0.045)" stroke-width="1"/><line x1="1251.5" y1="589.0" x2="1251.5" y2="824.0" stroke="rgba(240,250,255,0.09)" stroke-width="1"/><line x1="1251.5" y1="824.0" x2="1251.5" y2="827.0" stroke="rgba(240,250,255,0.045)" stroke-width="1"/><line x1="1292.5" y1="589.0" x2="1292.5" y2="824.0" stroke="rgba(240,250,255,0.09)" stroke-width="1"/><line x1="1292.5" y1="824.0" x2="1292.5" y2="827.0" stroke="rgba(240,250,255,0.045)" stroke-width="1"/><line x1="1333.5" y1="589.0" x2="1333.5" y2="824.0" stroke="rgba(240,250,255,0.09)" stroke-width="1"/><line x1="1333.5" y1="824.0" x2="1333.5" y2="827.0" stroke="rgba(240,250,255,0.045)" stroke-width="1"/><line x1="1374.5" y1="589.0" x2="1374.5" y2="824.0" stroke="rgba(240,250,255,0.09)" stroke-width="1"/><line x1="1374.5" y1="824.0" x2="1374.5" y2="827.0" stroke="rgba(240,250,255,0.045)" stroke-width="1"/><line x1="1415.5" y1="589.0" x2="1415.5" y2="824.0" stroke="rgba(240,250,255,0.09)" stroke-width="1"/><line x1="1415.5" y1="824.0" x2="1415.5" y2="827.0" stroke="rgba(240,250,255,0.045)" stroke-width="1"/><line x1="1456.5" y1="589.0" x2="1456.5" y2="824.0" stroke="rgba(240,250,255,0.09)" stroke-width="1"/><line x1="1456.5" y1="824.0" x2="1456.5" y2="827.0" stroke="rgba(240,250,255,0.045)" stroke-width="1"/><line x1="1497.5" y1="589.0" x2="1497.5" y2="824.0" stroke="rgba(240,250,255,0.09)" stroke-width="1"/><line x1="1497.5" y1="824.0" x2="1497.5" y2="827.0" stroke="rgba(240,250,255,0.045)" stroke-width="1"/><line x1="1538.5" y1="589.0" x2="1538.5" y2="824.0" stroke="rgba(240,250,255,0.09)" stroke-width="1"/><line x1="1538.5" y1="824.0" x2="1538.5" y2="827.0" stroke="rgba(240,250,255,0.045)" stroke-width="1"/><line x1="1580.5" y1="589.0" x2="1580.5" y2="824.0" stroke="rgba(240,250,255,0.09)" stroke-width="1"/><line x1="1580.5" y1="824.0" x2="1580.5" y2="827.0" stroke="rgba(240,250,255,0.045)" stroke-width="1"/><line x1="1621.5" y1="589.0" x2="1621.5" y2="824.0" stroke="rgba(240,250,255,0.09)" stroke-width="1"/><line x1="1621.5" y1="824.0" x2="1621.5" y2="827.0" stroke="rgba(240,250,255,0.045)" stroke-width="1"/><line x1="707.9" y1="823.5" x2="1655.0" y2="823.5" stroke="rgba(240,250,255,0.09)" stroke-width="1"/><line x1="707.9" y1="781.5" x2="1655.0" y2="781.5" stroke="rgba(240,250,255,0.09)" stroke-width="1"/><line x1="707.9" y1="739.5" x2="1655.0" y2="739.5" stroke="rgba(240,250,255,0.09)" stroke-width="1"/><line x1="707.9" y1="698.5" x2="1655.0" y2="698.5" stroke="rgba(240,250,255,0.09)" stroke-width="1"/><line x1="707.9" y1="656.5" x2="1655.0" y2="656.5" stroke="rgba(240,250,255,0.09)" stroke-width="1"/><line x1="707.9" y1="614.5" x2="1655.0" y2="614.5" stroke="rgba(240,250,255,0.09)" stroke-width="1"/><clipPath id="bc"><rect x="707.9" y="589.0" width="947.1" height="234.5"/></clipPath><g clip-path="url(#bc)"><rect x="703.57" y="679.63" width="6.2" height="143.37" fill="#68ad60"/><rect x="713.85" y="701.99" width="6.2" height="121.01" fill="#73bf69"/><rect x="724.13" y="723.10" width="6.2" height="99.90" fill="#73bf69"/><rect x="734.41" y="690.91" width="6.2" height="132.09" fill="#73bf69"/><rect x="744.69" y="670.43" width="6.2" height="152.57" fill="#73bf69"/><rect x="754.97" y="698.85" width="6.2" height="124.15" fill="#73bf69"/><rect x="765.25" y="666.67" width="6.2" height="156.33" fill="#73bf69"/><rect x="775.53" y="682.13" width="6.2" height="140.87" fill="#73bf69"/><rect x="785.81" y="696.35" width="6.2" height="126.65" fill="#73bf69"/><rect x="796.09" y="700.53" width="6.2" height="122.47" fill="#73bf69"/><rect x="806.37" y="722.68" width="6.2" height="100.32" fill="#73bf69"/><rect x="816.64" y="705.96" width="6.2" height="117.04" fill="#73bf69"/><rect x="826.92" y="710.98" width="6.2" height="112.02" fill="#73bf69"/><rect x="837.20" y="678.79" width="6.2" height="144.21" fill="#73bf69"/><rect x="847.48" y="711.81" width="6.2" height="111.19" fill="#73bf69"/><rect x="857.76" y="684.22" width="6.2" height="138.78" fill="#73bf69"/><rect x="868.04" y="726.86" width="6.2" height="96.14" fill="#73bf69"/><rect x="878.32" y="695.51" width="6.2" height="127.49" fill="#73bf69"/><rect x="888.60" y="698.85" width="6.2" height="124.15" fill="#73bf69"/><rect x="898.88" y="713.90" width="6.2" height="109.10" fill="#73bf69"/><rect x="909.16" y="750.27" width="6.2" height="72.73" fill="#73bf69"/><rect x="919.44" y="639.50" width="6.2" height="183.50" fill="#73bf69"/><rect x="929.72" y="698.02" width="6.2" height="124.98" fill="#73bf69"/><rect x="940.00" y="694.67" width="6.2" height="128.33" fill="#73bf69"/><rect x="950.28" y="706.38" width="6.2" height="116.62" fill="#73bf69"/><rect x="960.56" y="719.75" width="6.2" height="103.25" fill="#73bf69"/><rect x="970.84" y="726.44" width="6.2" height="96.56" fill="#73bf69"/><rect x="981.12" y="658.31" width="6.2" height="164.69" fill="#73bf69"/><rect x="991.40" y="703.87" width="6.2" height="119.13" fill="#73bf69"/><rect x="1001.68" y="770.75" width="6.2" height="52.25" fill="#73bf69"/><rect x="1011.96" y="681.30" width="6.2" height="141.70" fill="#73bf69"/><rect x="1022.24" y="670.01" width="6.2" height="152.99" fill="#73bf69"/><rect x="1032.51" y="712.65" width="6.2" height="110.35" fill="#73bf69"/><rect x="1042.79" y="714.32" width="6.2" height="108.68" fill="#73bf69"/><rect x="1053.07" y="696.35" width="6.2" height="126.65" fill="#73bf69"/><rect x="1063.35" y="715.16" width="6.2" height="107.84" fill="#73bf69"/><rect x="1073.63" y="614.84" width="6.2" height="208.16" fill="#73bf69"/><rect x="1083.91" y="695.93" width="6.2" height="127.07" fill="#73bf69"/><rect x="1094.19" y="792.49" width="6.2" height="30.51" fill="#73bf69"/><rect x="1104.47" y="702.20" width="6.2" height="120.80" fill="#73bf69"/><rect x="1114.75" y="683.81" width="6.2" height="139.19" fill="#73bf69"/><rect x="1125.03" y="717.66" width="6.2" height="105.34" fill="#73bf69"/><rect x="1135.31" y="666.25" width="6.2" height="156.75" fill="#73bf69"/><rect x="1145.59" y="772.84" width="6.2" height="50.16" fill="#73bf69"/><rect x="1155.87" y="679.21" width="6.2" height="143.79" fill="#73bf69"/><rect x="1166.15" y="793.74" width="6.2" height="29.26" fill="#73bf69"/><rect x="1176.43" y="685.48" width="6.2" height="137.52" fill="#73bf69"/><rect x="1186.71" y="731.88" width="6.2" height="91.12" fill="#73bf69"/><rect x="1196.99" y="720.17" width="6.2" height="102.83" fill="#73bf69"/><rect x="1207.27" y="716.83" width="6.2" height="106.17" fill="#73bf69"/><rect x="1217.55" y="694.26" width="6.2" height="128.74" fill="#73bf69"/><rect x="1227.83" y="720.17" width="6.2" height="102.83" fill="#73bf69"/><rect x="1238.10" y="670.43" width="6.2" height="152.57" fill="#73bf69"/><rect x="1248.38" y="780.78" width="6.2" height="42.22" fill="#73bf69"/><rect x="1258.66" y="628.63" width="6.2" height="194.37" fill="#73bf69"/><rect x="1268.94" y="611.91" width="6.2" height="211.09" fill="#73bf69"/><rect x="1279.22" y="653.29" width="6.2" height="169.71" fill="#73bf69"/><rect x="1289.50" y="679.21" width="6.2" height="143.79" fill="#73bf69"/><rect x="1299.78" y="662.07" width="6.2" height="160.93" fill="#73bf69"/><rect x="1310.06" y="654.13" width="6.2" height="168.87" fill="#73bf69"/><rect x="1320.34" y="709.72" width="6.2" height="113.28" fill="#73bf69"/><rect x="1330.62" y="701.78" width="6.2" height="121.22" fill="#73bf69"/><rect x="1340.90" y="701.36" width="6.2" height="121.64" fill="#73bf69"/><rect x="1351.18" y="700.11" width="6.2" height="122.89" fill="#73bf69"/><rect x="1361.46" y="736.06" width="6.2" height="86.94" fill="#73bf69"/><rect x="1371.74" y="684.22" width="6.2" height="138.78" fill="#73bf69"/><rect x="1382.02" y="614.84" width="6.2" height="208.16" fill="#73bf69"/><rect x="1392.30" y="677.12" width="6.2" height="145.88" fill="#73bf69"/><rect x="1402.58" y="707.63" width="6.2" height="115.37" fill="#73bf69"/><rect x="1412.86" y="715.16" width="6.2" height="107.84" fill="#73bf69"/><rect x="1423.14" y="744.83" width="6.2" height="78.17" fill="#73bf69"/><rect x="1433.41" y="724.35" width="6.2" height="98.65" fill="#73bf69"/><rect x="1443.69" y="688.40" width="6.2" height="134.60" fill="#73bf69"/><rect x="1453.97" y="651.62" width="6.2" height="171.38" fill="#73bf69"/><rect x="1464.25" y="709.30" width="6.2" height="113.70" fill="#73bf69"/><rect x="1474.53" y="707.63" width="6.2" height="115.37" fill="#73bf69"/><rect x="1484.81" y="737.31" width="6.2" height="85.69" fill="#73bf69"/><rect x="1495.09" y="727.28" width="6.2" height="95.72" fill="#73bf69"/><rect x="1505.37" y="684.64" width="6.2" height="138.36" fill="#73bf69"/><rect x="1515.65" y="661.23" width="6.2" height="161.77" fill="#73bf69"/><rect x="1525.93" y="694.26" width="6.2" height="128.74" fill="#73bf69"/><rect x="1536.21" y="754.87" width="6.2" height="68.13" fill="#73bf69"/><rect x="1546.49" y="682.97" width="6.2" height="140.03" fill="#73bf69"/><rect x="1556.77" y="659.98" width="6.2" height="163.02" fill="#73bf69"/><rect x="1567.05" y="758.21" width="6.2" height="64.79" fill="#73bf69"/><rect x="1577.33" y="661.65" width="6.2" height="161.35" fill="#73bf69"/><rect x="1587.61" y="638.24" width="6.2" height="184.76" fill="#73bf69"/><rect x="1597.89" y="677.12" width="6.2" height="145.88" fill="#73bf69"/><rect x="1608.17" y="690.49" width="6.2" height="132.51" fill="#73bf69"/><rect x="1618.45" y="741.49" width="6.2" height="81.51" fill="#73bf69"/><rect x="1628.73" y="695.51" width="6.2" height="127.49" fill="#73bf69"/><rect x="1639.01" y="699.69" width="6.2" height="123.31" fill="#73bf69"/><rect x="1649.28" y="822.30" width="6.2" height="1.0" fill="#73bf69"/></g></g></svg>
<span class="t" style="left:24.50px;top:6px;font-size:11.7px;color:#ccccdc;letter-spacing:0.204px;-webkit-text-stroke:0.2px #ccccdc;">Home</span>
<span class="t" style="left:76.00px;top:6px;font-size:11.7px;color:#ccccdc;letter-spacing:0.141px;-webkit-text-stroke:0.2px #ccccdc;">Dashboards</span>
<span class="t" style="left:160.00px;top:6px;font-size:11.7px;color:#8e8f9c;letter-spacing:0.205px;">Solarix Pli 5000</span>
<span class="t" style="left:246.00px;top:6px;font-size:11.7px;color:#8e8f9c;">-</span>
<span class="t" style="left:252.90px;top:6px;font-size:11.7px;color:#8e8f9c;letter-spacing:0.984px;">48</span>
<span class="t" style="left:1299.70px;top:6px;font-size:11.7px;color:#8e8f9c;letter-spacing:0.027px;">Search...</span>
<span class="t" style="left:1523.20px;top:8px;font-size:10.2px;color:#8e8f9c;letter-spacing:0.355px;">ctrl+k</span>
<span class="t" style="left:1508.60px;top:40px;font-size:10.2px;color:#ccccdc;letter-spacing:-0.087px;-webkit-text-stroke:0.2px #ccccdc;">Edit</span>
<span class="t" style="left:1556.40px;top:40px;font-size:10.2px;color:#ccccdc;letter-spacing:0.109px;-webkit-text-stroke:0.2px #ccccdc;">Export</span>
<span class="t" style="left:1620.40px;top:40px;font-size:10.2px;color:#ffffff;letter-spacing:-0.072px;-webkit-text-stroke:0.2px #ffffff;">Share</span>
<span class="t" style="left:1415.20px;top:81px;font-size:11.7px;color:#ccccdc;letter-spacing:0.153px;-webkit-text-stroke:0.2px #ccccdc;">Today</span>
<span class="t" style="left:1566.40px;top:81px;font-size:11.7px;color:#ccccdc;letter-spacing:0.060px;-webkit-text-stroke:0.2px #ccccdc;">Refresh</span>
<span class="t" style="left:1622.50px;top:81px;font-size:11.7px;color:#ccccdc;letter-spacing:0.420px;-webkit-text-stroke:0.2px #ccccdc;">10s</span>
<span class="t" style="left:19.50px;top:315px;font-size:11.7px;color:#ccccdc;letter-spacing:0.249px;-webkit-text-stroke:0.2px #ccccdc;">Solarix (Wand)</span>
<span class="t" style="left:173.60px;top:345px;font-size:10.2px;color:#6e9fff;letter-spacing:-0.062px;-webkit-text-stroke:0.2px #6e9fff;">Name</span>
<span class="t" style="left:303.50px;top:345px;font-size:10.2px;color:#6e9fff;letter-spacing:0.427px;-webkit-text-stroke:0.2px #6e9fff;">Last *</span>
<span class="t" style="left:173.60px;top:364px;font-size:10.2px;color:#ccccdc;letter-spacing:0.072px;">Batterie.Ladestrom</span>
<span class="t" style="left:316.70px;top:364px;font-size:10.2px;color:#ccccdc;letter-spacing:-0.148px;">0 V</span>
<span class="t" style="left:173.60px;top:383px;font-size:10.2px;color:#ccccdc;letter-spacing:0.042px;">Batterie.Entladestrom</span>
<span class="t" style="left:310.40px;top:383px;font-size:10.2px;color:#ccccdc;letter-spacing:0.110px;">15 V</span>
<span class="t" style="left:173.60px;top:402px;font-size:10.2px;color:#ccccdc;letter-spacing:0.037px;">Batterie.Spannung</span>
<span class="t" style="left:310.40px;top:402px;font-size:10.2px;color:#ccccdc;letter-spacing:0.110px;">52 V</span>
<span class="t" style="left:173.60px;top:422px;font-size:10.2px;color:#ccccdc;letter-spacing:0.045px;">PV.Spannung</span>
<span class="t" style="left:316.70px;top:422px;font-size:10.2px;color:#ccccdc;letter-spacing:-0.148px;">0 V</span>
<span class="t" style="left:434.50px;top:315px;font-size:11.7px;color:#ccccdc;letter-spacing:0.258px;-webkit-text-stroke:0.2px #ccccdc;">Solarix (Dach)</span>
<span class="t" style="left:588.50px;top:345px;font-size:10.2px;color:#6e9fff;letter-spacing:-0.062px;-webkit-text-stroke:0.2px #6e9fff;">Name</span>
<span class="t" style="left:718.50px;top:345px;font-size:10.2px;color:#6e9fff;letter-spacing:0.427px;-webkit-text-stroke:0.2px #6e9fff;">Last *</span>
<span class="t" style="left:588.50px;top:364px;font-size:10.2px;color:#ccccdc;letter-spacing:0.072px;">Batterie.Ladestrom</span>
<span class="t" style="left:731.70px;top:364px;font-size:10.2px;color:#ccccdc;letter-spacing:-0.148px;">0 V</span>
<span class="t" style="left:588.50px;top:383px;font-size:10.2px;color:#ccccdc;letter-spacing:0.042px;">Batterie.Entladestrom</span>
<span class="t" style="left:725.40px;top:383px;font-size:10.2px;color:#ccccdc;letter-spacing:0.110px;">15 V</span>
<span class="t" style="left:588.50px;top:402px;font-size:10.2px;color:#ccccdc;letter-spacing:0.037px;">Batterie.Spannung</span>
<span class="t" style="left:716.40px;top:402px;font-size:10.2px;color:#ccccdc;letter-spacing:0.166px;">52.2 V</span>
<span class="t" style="left:588.50px;top:422px;font-size:10.2px;color:#ccccdc;letter-spacing:0.045px;">PV.Spannung</span>
<span class="t" style="left:731.70px;top:422px;font-size:10.2px;color:#ccccdc;letter-spacing:-0.148px;">0 V</span>
<span class="t" style="left:849.70px;top:315px;font-size:11.7px;color:#ccccdc;letter-spacing:0.369px;-webkit-text-stroke:0.2px #ccccdc;">Victron (Wand)</span>
<span class="t" style="left:1003.80px;top:345px;font-size:10.2px;color:#6e9fff;letter-spacing:-0.062px;-webkit-text-stroke:0.2px #6e9fff;">Name</span>
<span class="t" style="left:1121.50px;top:345px;font-size:10.2px;color:#6e9fff;letter-spacing:0.427px;-webkit-text-stroke:0.2px #6e9fff;">Last *</span>
<span class="t" style="left:1003.80px;top:364px;font-size:10.2px;color:#ccccdc;letter-spacing:0.072px;">Batterie.Ladestrom</span>
<span class="t" style="left:1134.70px;top:364px;font-size:10.2px;color:#ccccdc;letter-spacing:-0.148px;">0 V</span>
<span class="t" style="left:1003.80px;top:383px;font-size:10.2px;color:#ccccdc;letter-spacing:0.037px;">Batterie.Spannung</span>
<span class="t" style="left:1119.40px;top:383px;font-size:10.2px;color:#ccccdc;letter-spacing:0.166px;">52.4 V</span>
<span class="t" style="left:1003.80px;top:402px;font-size:10.2px;color:#ccccdc;letter-spacing:0.045px;">PV.Spannung</span>
<span class="t" style="left:1119.40px;top:402px;font-size:10.2px;color:#ccccdc;letter-spacing:0.166px;">1.95 V</span>
<span class="t" style="left:1003.80px;top:422px;font-size:10.2px;color:#ccccdc;letter-spacing:0.098px;">PV.Leistung</span>
<span class="t" style="left:1134.70px;top:422px;font-size:10.2px;color:#ccccdc;letter-spacing:-0.148px;">0 V</span>
<span class="t" style="left:1265.90px;top:315px;font-size:11.7px;color:#ccccdc;letter-spacing:0.340px;-webkit-text-stroke:0.2px #ccccdc;">Victron (Dach)</span>
<span class="t" style="left:1419.80px;top:345px;font-size:10.2px;color:#6e9fff;letter-spacing:-0.062px;-webkit-text-stroke:0.2px #6e9fff;">Name</span>
<span class="t" style="left:1537.80px;top:345px;font-size:10.2px;color:#6e9fff;letter-spacing:0.427px;-webkit-text-stroke:0.2px #6e9fff;">Last *</span>
<span class="t" style="left:1419.80px;top:364px;font-size:10.2px;color:#ccccdc;letter-spacing:0.072px;">Batterie.Ladestrom</span>
<span class="t" style="left:1551.00px;top:364px;font-size:10.2px;color:#ccccdc;letter-spacing:-0.148px;">0 V</span>
<span class="t" style="left:1419.80px;top:383px;font-size:10.2px;color:#ccccdc;letter-spacing:0.037px;">Batterie.Spannung</span>
<span class="t" style="left:1535.70px;top:383px;font-size:10.2px;color:#ccccdc;letter-spacing:0.166px;">52.4 V</span>
<span class="t" style="left:1419.80px;top:402px;font-size:10.2px;color:#ccccdc;letter-spacing:0.045px;">PV.Spannung</span>
<span class="t" style="left:1536.40px;top:402px;font-size:10.2px;color:#ccccdc;letter-spacing:0.037px;">60 mV</span>
<span class="t" style="left:1419.80px;top:422px;font-size:10.2px;color:#ccccdc;letter-spacing:0.098px;">PV.Leistung</span>
<span class="t" style="left:1551.00px;top:422px;font-size:10.2px;color:#ccccdc;letter-spacing:-0.148px;">0 V</span>
<span class="t" style="left:19.50px;top:528px;font-size:11.7px;color:#ccccdc;letter-spacing:0.340px;-webkit-text-stroke:0.2px #ccccdc;">Leistungsdaten</span>
<span class="t" style="left:325.30px;top:558px;font-size:11.7px;color:#ccccdc;letter-spacing:0.173px;-webkit-text-stroke:0.2px #ccccdc;">Gesamte Energie von heute</span>
<span class="t" style="left:469.78px;top:584px;font-size:11.7px;color:#ccccdc;">0</span>
<span class="t" style="left:33.40px;top:852px;font-size:11.7px;color:#ccccdc;letter-spacing:0.106px;">Gesamte Energie von heute</span>
<span class="t" style="left:508.00px;top:660px;font-size:17.2px;color:#f0f3f0;letter-spacing:0.249px;-webkit-text-stroke:0.2px #f0f3f0;">Batterie Mode</span>
<span class="t" style="left:642.70px;top:558px;font-size:11.7px;color:#ccccdc;letter-spacing:0.307px;-webkit-text-stroke:0.2px #ccccdc;">Solarleistung der letzten 3 Monate</span>
<span class="t" style="left:858.10px;top:558px;font-size:11.7px;color:#6e9fff;letter-spacing:0.215px;">Last 3 months</span>
<div id="cv">
<span class="t" style="left:53.10px;top:145px;font-size:10.2px;color:#ccccdc;letter-spacing:-0.378px;">1.5 kV</span>
<span class="t" style="left:52.60px;top:187px;font-size:10.2px;color:#ccccdc;letter-spacing:-0.278px;">1.0 kV</span>
<span class="t" style="left:44.60px;top:229px;font-size:10.2px;color:#ccccdc;letter-spacing:0.062px;">500.0 V</span>
<span class="t" style="left:56.60px;top:272px;font-size:10.2px;color:#ccccdc;letter-spacing:-0.074px;">0.0 V</span>
<span class="t" style="left:2.40px;top:200.40px;font-size:10.2px;color:#ccccdc;transform-origin:20.40px 3.50px;transform:rotate(-90deg);letter-spacing:0.324px;">Leistung</span>
<span class="t" style="left:71.20px;top:284px;font-size:10.2px;color:#ccccdc;letter-spacing:0.375px;">00:00</span>
<span class="t" style="left:124.20px;top:284px;font-size:10.2px;color:#ccccdc;letter-spacing:0.375px;">04:00</span>
<span class="t" style="left:178.20px;top:284px;font-size:10.2px;color:#ccccdc;letter-spacing:0.375px;">08:00</span>
<span class="t" style="left:233.20px;top:284px;font-size:10.2px;color:#ccccdc;letter-spacing:0.375px;">12:00</span>
<span class="t" style="left:287.20px;top:284px;font-size:10.2px;color:#ccccdc;letter-spacing:0.375px;">16:00</span>
<span class="t" style="left:340.20px;top:284px;font-size:10.2px;color:#ccccdc;letter-spacing:0.375px;">20:00</span>
<span class="t" style="left:469.30px;top:145px;font-size:10.2px;color:#ccccdc;letter-spacing:-0.281px;">1.5 kW</span>
<span class="t" style="left:468.80px;top:187px;font-size:10.2px;color:#ccccdc;letter-spacing:-0.181px;">1.0 kW</span>
<span class="t" style="left:460.60px;top:229px;font-size:10.2px;color:#ccccdc;letter-spacing:0.174px;">500.0 W</span>
<span class="t" style="left:472.60px;top:272px;font-size:10.2px;color:#ccccdc;letter-spacing:0.098px;">0.0 W</span>
<span class="t" style="left:418.10px;top:200.40px;font-size:10.2px;color:#ccccdc;transform-origin:20.40px 3.50px;transform:rotate(-90deg);letter-spacing:0.324px;">Leistung</span>
<span class="t" style="left:490.70px;top:284px;font-size:10.2px;color:#ccccdc;letter-spacing:0.375px;">00:00</span>
<span class="t" style="left:543.70px;top:284px;font-size:10.2px;color:#ccccdc;letter-spacing:0.375px;">04:00</span>
<span class="t" style="left:597.70px;top:284px;font-size:10.2px;color:#ccccdc;letter-spacing:0.375px;">08:00</span>
<span class="t" style="left:651.40px;top:284px;font-size:10.2px;color:#ccccdc;letter-spacing:0.375px;">12:00</span>
<span class="t" style="left:704.70px;top:284px;font-size:10.2px;color:#ccccdc;letter-spacing:0.375px;">16:00</span>
<span class="t" style="left:757.80px;top:284px;font-size:10.2px;color:#ccccdc;letter-spacing:0.375px;">20:00</span>
<span class="t" style="left:875.00px;top:129px;font-size:10.2px;color:#ccccdc;letter-spacing:-0.163px;">100 W</span>
<span class="t" style="left:878.80px;top:157px;font-size:10.2px;color:#ccccdc;letter-spacing:0.406px;">80 W</span>
<span class="t" style="left:878.80px;top:186px;font-size:10.2px;color:#ccccdc;letter-spacing:0.406px;">60 W</span>
<span class="t" style="left:878.80px;top:214px;font-size:10.2px;color:#ccccdc;letter-spacing:0.406px;">40 W</span>
<span class="t" style="left:879.20px;top:243px;font-size:10.2px;color:#ccccdc;letter-spacing:0.273px;">20 W</span>
<span class="t" style="left:885.00px;top:272px;font-size:10.2px;color:#ccccdc;letter-spacing:0.338px;">0 W</span>
<span class="t" style="left:1203.00px;top:141px;font-size:10.2px;color:#ccccdc;letter-spacing:-0.500px;">100</span>
<span class="t" style="left:1203.00px;top:168px;font-size:10.2px;color:#ccccdc;letter-spacing:0.456px;">80</span>
<span class="t" style="left:1203.00px;top:194px;font-size:10.2px;color:#ccccdc;letter-spacing:0.456px;">60</span>
<span class="t" style="left:1203.00px;top:220px;font-size:10.2px;color:#ccccdc;letter-spacing:0.456px;">40</span>
<span class="t" style="left:1203.00px;top:245px;font-size:10.2px;color:#ccccdc;letter-spacing:0.456px;">20</span>
<span class="t" style="left:1203.00px;top:272px;font-size:10.2px;color:#ccccdc;">0</span>
<span class="t" style="left:843.85px;top:200.50px;font-size:10.2px;color:#ccccdc;transform-origin:10.25px 3.50px;transform:rotate(-90deg);letter-spacing:-0.026px;">Watt</span>
<span class="t" style="left:1217.85px;top:200.40px;font-size:10.2px;color:#ccccdc;transform-origin:23.65px 3.50px;transform:rotate(90deg);letter-spacing:0.119px;">Spannung</span>
<span class="t" style="left:895.50px;top:284px;font-size:10.2px;color:#ccccdc;letter-spacing:0.375px;">00:00</span>
<span class="t" style="left:943.60px;top:284px;font-size:10.2px;color:#ccccdc;letter-spacing:0.375px;">04:00</span>
<span class="t" style="left:991.70px;top:284px;font-size:10.2px;color:#ccccdc;letter-spacing:0.375px;">08:00</span>
<span class="t" style="left:1040.20px;top:284px;font-size:10.2px;color:#ccccdc;letter-spacing:0.375px;">12:00</span>
<span class="t" style="left:1089.10px;top:284px;font-size:10.2px;color:#ccccdc;letter-spacing:0.375px;">16:00</span>
<span class="t" style="left:1137.40px;top:284px;font-size:10.2px;color:#ccccdc;letter-spacing:0.375px;">20:00</span>
<span class="t" style="left:1290.00px;top:129px;font-size:10.2px;color:#ccccdc;letter-spacing:-0.163px;">100 W</span>
<span class="t" style="left:1293.80px;top:157px;font-size:10.2px;color:#ccccdc;letter-spacing:0.406px;">80 W</span>
<span class="t" style="left:1293.80px;top:186px;font-size:10.2px;color:#ccccdc;letter-spacing:0.406px;">60 W</span>
<span class="t" style="left:1293.80px;top:214px;font-size:10.2px;color:#ccccdc;letter-spacing:0.406px;">40 W</span>
<span class="t" style="left:1294.20px;top:243px;font-size:10.2px;color:#ccccdc;letter-spacing:0.273px;">20 W</span>
<span class="t" style="left:1300.00px;top:272px;font-size:10.2px;color:#ccccdc;letter-spacing:0.338px;">0 W</span>
<span class="t" style="left:1618.00px;top:141px;font-size:10.2px;color:#ccccdc;letter-spacing:-0.500px;">100</span>
<span class="t" style="left:1618.00px;top:168px;font-size:10.2px;color:#ccccdc;letter-spacing:0.456px;">80</span>
<span class="t" style="left:1618.00px;top:194px;font-size:10.2px;color:#ccccdc;letter-spacing:0.456px;">60</span>
<span class="t" style="left:1618.00px;top:220px;font-size:10.2px;color:#ccccdc;letter-spacing:0.456px;">40</span>
<span class="t" style="left:1618.00px;top:245px;font-size:10.2px;color:#ccccdc;letter-spacing:0.456px;">20</span>
<span class="t" style="left:1618.00px;top:272px;font-size:10.2px;color:#ccccdc;">0</span>
<span class="t" style="left:1258.85px;top:200.50px;font-size:10.2px;color:#ccccdc;transform-origin:10.25px 3.50px;transform:rotate(-90deg);letter-spacing:-0.026px;">Watt</span>
<span class="t" style="left:1632.85px;top:200.40px;font-size:10.2px;color:#ccccdc;transform-origin:23.65px 3.50px;transform:rotate(90deg);letter-spacing:0.119px;">Spannung</span>
<span class="t" style="left:1310.30px;top:284px;font-size:10.2px;color:#ccccdc;letter-spacing:0.375px;">00:00</span>
<span class="t" style="left:1358.60px;top:284px;font-size:10.2px;color:#ccccdc;letter-spacing:0.375px;">04:00</span>
<span class="t" style="left:1406.70px;top:284px;font-size:10.2px;color:#ccccdc;letter-spacing:0.375px;">08:00</span>
<span class="t" style="left:1455.20px;top:284px;font-size:10.2px;color:#ccccdc;letter-spacing:0.375px;">12:00</span>
<span class="t" style="left:1504.10px;top:284px;font-size:10.2px;color:#ccccdc;letter-spacing:0.375px;">16:00</span>
<span class="t" style="left:1552.40px;top:284px;font-size:10.2px;color:#ccccdc;letter-spacing:0.375px;">20:00</span>
<span class="t" style="left:680.60px;top:819px;font-size:10.2px;color:#ccccdc;letter-spacing:-0.060px;">0 Wh</span>
<span class="t" style="left:668.80px;top:777px;font-size:10.2px;color:#ccccdc;letter-spacing:0.171px;">10 kWh</span>
<span class="t" style="left:668.80px;top:735px;font-size:10.2px;color:#ccccdc;letter-spacing:0.171px;">20 kWh</span>
<span class="t" style="left:668.80px;top:694px;font-size:10.2px;color:#ccccdc;letter-spacing:0.171px;">30 kWh</span>
<span class="t" style="left:668.80px;top:652px;font-size:10.2px;color:#ccccdc;letter-spacing:0.171px;">40 kWh</span>
<span class="t" style="left:668.80px;top:610px;font-size:10.2px;color:#ccccdc;letter-spacing:0.171px;">50 kWh</span>
<span class="t" style="left:629.95px;top:702.60px;font-size:10.2px;color:#ccccdc;transform-origin:17.75px 3.50px;transform:rotate(-90deg);letter-spacing:0.284px;">pro Tag</span>
<span class="t" style="left:702.90px;top:831px;font-size:10.2px;color:#ccccdc;letter-spacing:0.075px;">06/14</span>
<span class="t" style="left:744.02px;top:831px;font-size:10.2px;color:#ccccdc;letter-spacing:0.075px;">06/18</span>
<span class="t" style="left:785.14px;top:831px;font-size:10.2px;color:#ccccdc;letter-spacing:0.075px;">06/22</span>
<span class="t" style="left:826.25px;top:831px;font-size:10.2px;color:#ccccdc;letter-spacing:0.075px;">06/26</span>
<span class="t" style="left:867.37px;top:831px;font-size:10.2px;color:#ccccdc;letter-spacing:0.075px;">06/30</span>
<span class="t" style="left:908.49px;top:831px;font-size:10.2px;color:#ccccdc;letter-spacing:0.075px;">07/04</span>
<span class="t" style="left:949.61px;top:831px;font-size:10.2px;color:#ccccdc;letter-spacing:0.075px;">07/08</span>
<span class="t" style="left:990.73px;top:831px;font-size:10.2px;color:#ccccdc;letter-spacing:0.075px;">07/12</span>
<span class="t" style="left:1031.84px;top:831px;font-size:10.2px;color:#ccccdc;letter-spacing:0.075px;">07/16</span>
<span class="t" style="left:1072.96px;top:831px;font-size:10.2px;color:#ccccdc;letter-spacing:0.075px;">07/20</span>
<span class="t" style="left:1114.08px;top:831px;font-size:10.2px;color:#ccccdc;letter-spacing:0.075px;">07/24</span>
<span class="t" style="left:1155.20px;top:831px;font-size:10.2px;color:#ccccdc;letter-spacing:0.075px;">07/28</span>
<span class="t" style="left:1196.32px;top:831px;font-size:10.2px;color:#ccccdc;letter-spacing:0.075px;">08/01</span>
<span class="t" style="left:1237.43px;top:831px;font-size:10.2px;color:#ccccdc;letter-spacing:0.075px;">08/05</span>
<span class="t" style="left:1278.55px;top:831px;font-size:10.2px;color:#ccccdc;letter-spacing:0.075px;">08/09</span>
<span class="t" style="left:1319.67px;top:831px;font-size:10.2px;color:#ccccdc;letter-spacing:0.075px;">08/13</span>
<span class="t" style="left:1360.79px;top:831px;font-size:10.2px;color:#ccccdc;letter-spacing:0.075px;">08/17</span>
<span class="t" style="left:1401.91px;top:831px;font-size:10.2px;color:#ccccdc;letter-spacing:0.075px;">08/21</span>
<span class="t" style="left:1443.02px;top:831px;font-size:10.2px;color:#ccccdc;letter-spacing:0.075px;">08/25</span>
<span class="t" style="left:1484.14px;top:831px;font-size:10.2px;color:#ccccdc;letter-spacing:0.075px;">08/29</span>
<span class="t" style="left:1525.26px;top:831px;font-size:10.2px;color:#ccccdc;letter-spacing:0.075px;">09/02</span>
<span class="t" style="left:1566.38px;top:831px;font-size:10.2px;color:#ccccdc;letter-spacing:0.075px;">09/06</span>
<span class="t" style="left:1607.50px;top:831px;font-size:10.2px;color:#ccccdc;letter-spacing:0.075px;">09/10</span>
</div>
<div style="left:1667.00px;top:0.00px;width:11.00px;height:884.00px;background:rgba(52,52,55,0.35);"></div>
<div style="left:1670.00px;top:171.00px;width:6.00px;height:723.00px;background:#302f35;border-radius:3px"></div>
</div></body></html>
